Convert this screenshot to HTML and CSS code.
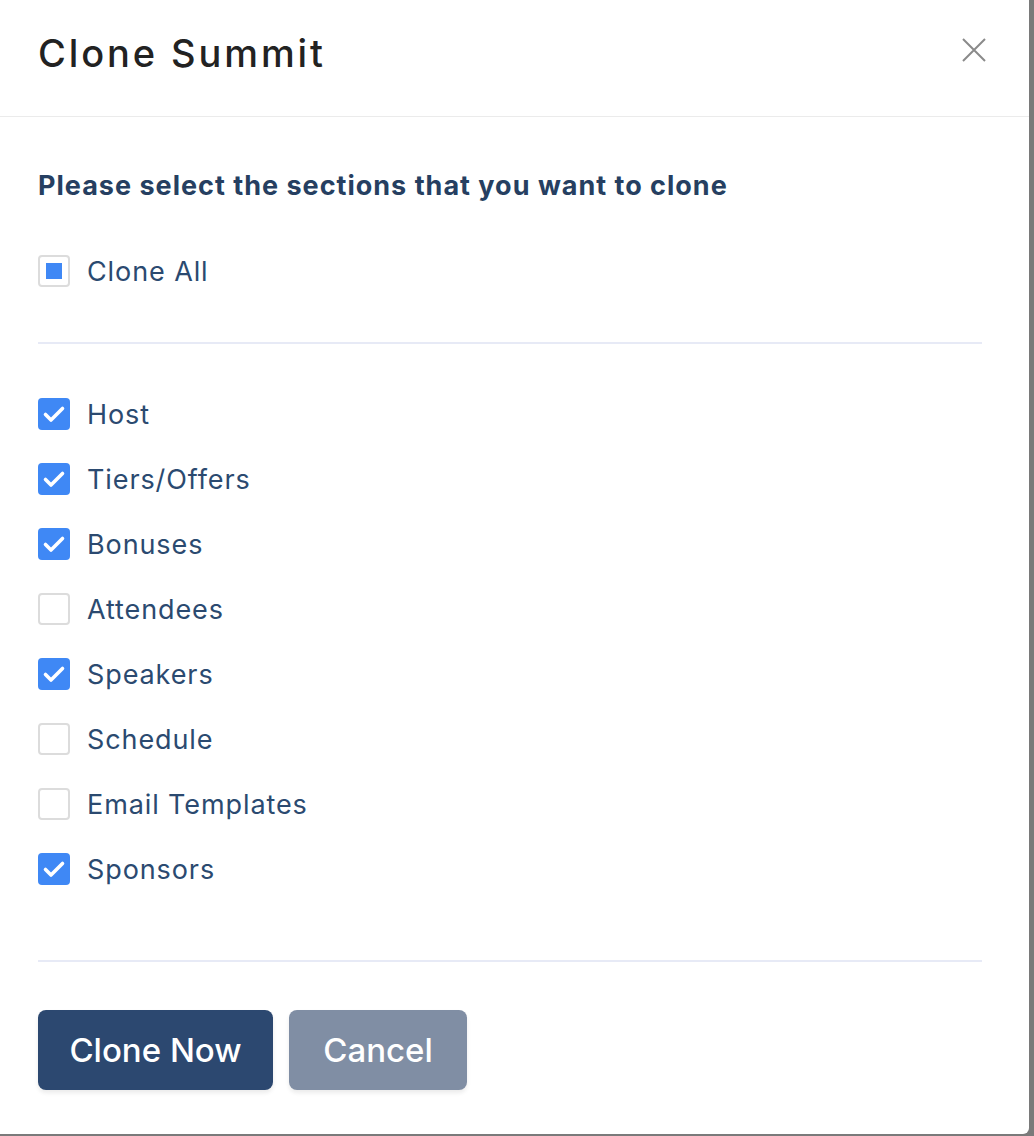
FILE: index.html
```html
<!DOCTYPE html>
<html>
<head>
<meta charset="utf-8">
<link rel="stylesheet" href="styles.css">
</head>
<body>
<div class="modal">
  <div class="modal-header">
    <h1 class="title">Clone Summit</h1>
    <button class="close" aria-label="Close">
      <svg width="26" height="26" viewBox="0 0 26 26"><path d="M2 2 L24 24 M24 2 L2 24" stroke="#8a8a8a" stroke-width="2" fill="none"/></svg>
    </button>
  </div>
  <div class="modal-body">
    <p class="subtitle">Please select the sections that you want to clone</p>
    <label class="row all">
      <span class="box partial"><span class="dot"></span></span>
      <span class="label">Clone All</span>
    </label>
    <hr class="sep first">
    <div class="list">
      <label class="row"><span class="box checked"><svg viewBox="0 0 32 32" width="32" height="32"><path d="M7.5 16.5 L13 22 L24.5 10.5" stroke="#fff" stroke-width="3.6" fill="none" stroke-linecap="round" stroke-linejoin="round"/></svg></span><span class="label">Host</span></label>
      <label class="row"><span class="box checked"><svg viewBox="0 0 32 32" width="32" height="32"><path d="M7.5 16.5 L13 22 L24.5 10.5" stroke="#fff" stroke-width="3.6" fill="none" stroke-linecap="round" stroke-linejoin="round"/></svg></span><span class="label">Tiers/Offers</span></label>
      <label class="row"><span class="box checked"><svg viewBox="0 0 32 32" width="32" height="32"><path d="M7.5 16.5 L13 22 L24.5 10.5" stroke="#fff" stroke-width="3.6" fill="none" stroke-linecap="round" stroke-linejoin="round"/></svg></span><span class="label">Bonuses</span></label>
      <label class="row"><span class="box"></span><span class="label">Attendees</span></label>
      <label class="row"><span class="box checked"><svg viewBox="0 0 32 32" width="32" height="32"><path d="M7.5 16.5 L13 22 L24.5 10.5" stroke="#fff" stroke-width="3.6" fill="none" stroke-linecap="round" stroke-linejoin="round"/></svg></span><span class="label">Speakers</span></label>
      <label class="row"><span class="box"></span><span class="label">Schedule</span></label>
      <label class="row"><span class="box"></span><span class="label">Email Templates</span></label>
      <label class="row"><span class="box checked"><svg viewBox="0 0 32 32" width="32" height="32"><path d="M7.5 16.5 L13 22 L24.5 10.5" stroke="#fff" stroke-width="3.6" fill="none" stroke-linecap="round" stroke-linejoin="round"/></svg></span><span class="label">Sponsors</span></label>
    </div>
    <hr class="sep last">
    <div class="actions">
      <button class="btn primary">Clone Now</button>
      <button class="btn secondary">Cancel</button>
    </div>
  </div>
</div>
</body>
</html>
```

FILE: styles.css
```css
* { box-sizing: border-box; }
html, body {
  margin: 0;
  padding: 0;
  background: #7a7a7a;
  height: 1136px;
  overflow: hidden;
}
body {
  font-family: Inter, "Open Sans", "Liberation Sans", sans-serif;
}
.modal {
  width: 1029px;
  height: 1134px;
  background: #fff;
  border-bottom-right-radius: 6px;
}
.modal-header {
  height: 117px;
  border-bottom: 1px solid #ebebeb;
  display: flex;
  align-items: center;
  justify-content: space-between;
  padding: 0 42px 10px 38px;
}
.title {
  margin: 0;
  font-size: 38px;
  font-weight: 500;
  color: #222;
  letter-spacing: 2.9px;
}
.close {
  border: 0;
  background: none;
  padding: 0;
  width: 26px;
  height: 26px;
  display: flex;
  margin-top: -7px;
}
.modal-body {
  padding: 53px 47px 0 38px;
}
.subtitle {
  margin: 0;
  height: 32px;
  line-height: 32px;
  font-size: 27px;
  font-weight: 700;
  color: #263f61;
  letter-spacing: 1px;
}
.row {
  display: flex;
  align-items: center;
  gap: 17px;
  height: 32px;
}
.row.all {
  margin-top: 53px;
}
.box {
  width: 32px;
  height: 32px;
  flex: none;
  border: 2px solid #dcdcdc;
  border-radius: 4px;
  background: #fff;
  display: flex;
  align-items: center;
  justify-content: center;
}
.box.checked {
  border: 0;
  background: #3f88f5;
}
.box .dot {
  width: 16px;
  height: 16px;
  background: #3f88f5;
}
.label {
  font-size: 27px;
  color: #2b4a70;
  letter-spacing: 0.9px;
}
.sep {
  border: 0;
  height: 2px;
  background: #e7eaf6;
  margin: 0;
}
.sep.first {
  margin-top: 55px;
}
.list {
  display: flex;
  flex-direction: column;
  gap: 33px;
  margin-top: 54px;
}
.sep.last {
  margin-top: 75px;
}
.actions {
  display: flex;
  gap: 16px;
  margin-top: 48px;
}
.btn {
  height: 80px;
  border: 0;
  border-radius: 8px;
  color: #fff;
  font-family: inherit;
  font-size: 33px;
  font-weight: 500;
  box-shadow: 0 3px 4px rgba(0,0,0,0.08);
}
.btn.primary {
  width: 235px;
  background: #2c4870;
}
.btn.secondary {
  width: 178px;
  background: #808ea4;
}
```
